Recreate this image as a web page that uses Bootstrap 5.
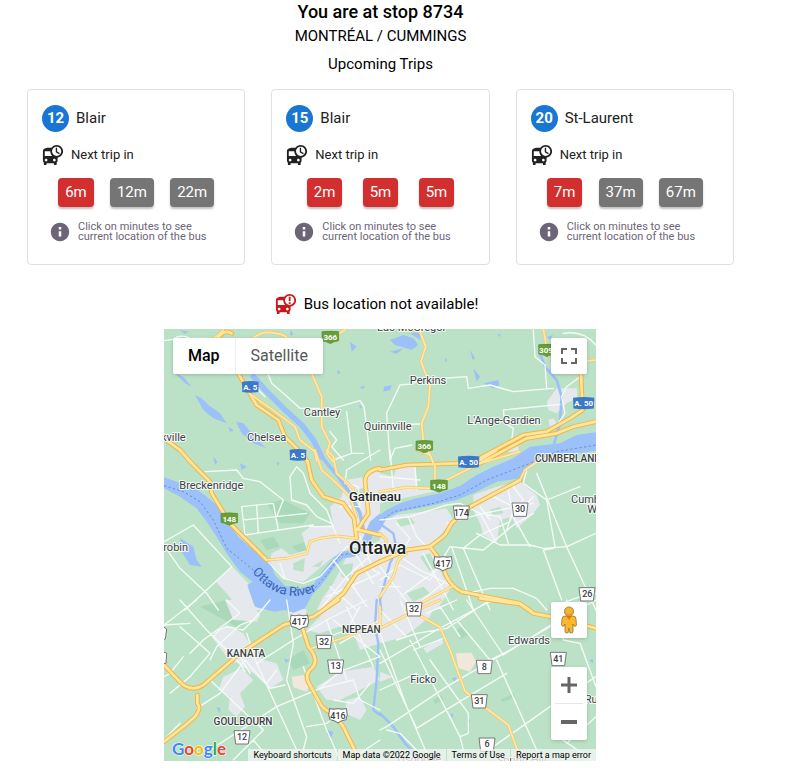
<!DOCTYPE html>
<html lang="en">
<head>
<meta charset="utf-8">
<meta name="viewport" content="width=device-width, initial-scale=1">
<title>Stop 8734</title>
<link href="https://cdn.jsdelivr.net/npm/bootstrap@5.3.0/dist/css/bootstrap.min.css" rel="stylesheet">
<style>
body{font-family:Roboto,"Liberation Sans",sans-serif;color:#000;font-size:15px;line-height:24px}
.page{padding:0 47px 9px 14px}
.stop-title{font-size:18px;font-weight:500;line-height:24px;margin:0}
.stop-name{font-size:15px;font-weight:400;line-height:24px;margin:0}
.upcoming{font-size:15px;font-weight:400;line-height:24px;margin:4px 0 13px}
.trips{--bs-gutter-x:26px;--bs-gutter-y:26px;margin:-26px 0 0}
.trip{border:1px solid #e0e0e0;border-radius:4px;color:#212121;padding:15px 14px 22px}
.route-no{width:27px;height:27px;background:#1976d2;font-size:15px;font-weight:700}
.route-head{gap:7px;font-size:15px;line-height:27px}
.next-row{gap:7px;margin-top:12px;font-size:13px;line-height:22px}
.times{margin-top:12px}
.btn-time{--bs-btn-color:#fff;--bs-btn-hover-color:#fff;--bs-btn-bg:#757575;--bs-btn-hover-bg:#616161;--bs-btn-border-width:0;--bs-btn-padding-x:7px;--bs-btn-padding-y:0;--bs-btn-font-size:15px;--bs-btn-line-height:29px;--bs-btn-border-radius:4px;box-shadow:0 2px 2px rgba(0,0,0,.24)}
.btn-soon{--bs-btn-bg:#d32f2f;--bs-btn-hover-bg:#b71c1c}
.hint{gap:8px;margin-top:15px;padding-left:8px;color:#6c6577;font-size:11px;line-height:10px}
.live{padding-right:1px}
.status{gap:7px;margin:28px 0 14px;padding-right:7px;line-height:22px}
.map-box{max-width:432px;aspect-ratio:1;overflow:hidden;background:#bbe2c6}
.ctl{background:#fff;box-shadow:0 1px 4px -1px rgba(0,0,0,.3);border-radius:2px}
.ctl button{border:0;background:none;padding:0;width:36px;height:36px;display:flex;align-items:center;justify-content:center}
.map-types{top:9px;left:9px}
.map-types button{width:auto;font-size:16px;color:#565656;padding:0 15px}
.map-types button+button{border-left:1px solid #eee}
.map-types button.chosen{color:#000;font-weight:500}
.right-top{top:9px;right:9px}
.right-bottom{right:9px;bottom:21px;gap:29px}
.zoom-line{height:1px;margin:0 4px;background:#e6e6e6}
.legal{font-size:9px;line-height:12px;right:0;bottom:0;gap:1px}
.legal>*{border:0;background:rgba(245,245,245,.74);color:#000;padding:0 5px;text-decoration:none}
.g-logo{left:8px;bottom:0}
.place{font-size:33px;fill:#3c4043;stroke:#f4faf6;stroke-width:6px;paint-order:stroke;stroke-linejoin:round;text-anchor:middle}
.district{font-size:30px;font-weight:500}
.town{font-size:39px;font-weight:500;fill:#202124}
.city{font-size:54px;font-weight:500;fill:#202124}
.from-left{text-anchor:start}
.num{font-size:27px;font-weight:500;text-anchor:middle}
.gnum{font-size:24px;font-weight:700;fill:#fff;text-anchor:middle}
</style>
<script src="https://cdn.jsdelivr.net/npm/bootstrap@5.3.0/dist/js/bootstrap.bundle.min.js"></script>
</head>
<body>
<svg class="d-none" aria-hidden="true">
  <symbol id="bus-clock" viewBox="0 0 24 24"><path d="M16 1c-2.4 0-4.52 1.21-5.78 3.05C9.84 4 9.42 4 9 4c-4.42 0-8 .5-8 4v10c0 .88.39 1.67 1 2.22V22c0 .55.45 1 1 1h1c.55 0 1-.45 1-1v-1h8v1c0 .55.45 1 1 1h1c.55 0 1-.45 1-1v-1.78c.61-.55 1-1.34 1-2.22v-3.08c3.39-.49 6-3.39 6-6.92 0-3.87-3.13-7-7-7zM4.5 19c-.83 0-1.5-.67-1.5-1.5S3.67 16 4.5 16s1.5.67 1.5 1.5S5.33 19 4.5 19zM3 13V8h6c0 1.96.81 3.73 2.11 5H3zm10.5 6c-.83 0-1.5-.67-1.5-1.5s.67-1.5 1.5-1.5 1.5.67 1.5 1.5-.67 1.5-1.5 1.5zm2.5-6c-2.76 0-5-2.24-5-5s2.24-5 5-5 5 2.24 5 5-2.24 5-5 5zm.5-9H15v5l3.62 2.16.75-1.23-2.87-1.68V4z"/></symbol>
  <symbol id="bus-alert" viewBox="0 0 24 24"><path d="M16 1c-2.4 0-4.52 1.21-5.78 3.05C9.84 4 9.42 4 9 4c-4.42 0-8 .5-8 4v10c0 .88.39 1.67 1 2.22V22c0 .55.45 1 1 1h1c.55 0 1-.45 1-1v-1h8v1c0 .55.45 1 1 1h1c.55 0 1-.45 1-1v-1.78c.61-.55 1-1.34 1-2.22v-3.08c3.39-.49 6-3.39 6-6.92 0-3.87-3.13-7-7-7zM4.5 19c-.83 0-1.5-.67-1.5-1.5S3.67 16 4.5 16s1.5.67 1.5 1.5S5.33 19 4.5 19zM3 13V8h6c0 1.96.81 3.73 2.11 5H3zm10.5 6c-.83 0-1.5-.67-1.5-1.5s.67-1.5 1.5-1.5 1.5.67 1.5 1.5-.67 1.5-1.5 1.5zm2.5-6c-2.76 0-5-2.24-5-5s2.24-5 5-5 5 2.24 5 5-2.24 5-5 5zM15 4h2v5h-2zm0 6h2v2h-2z"/></symbol>
  <symbol id="info" viewBox="0 0 24 24"><path d="M12 1C5.900 1 1 5.900 1 12s4.900 11 11 11 11-4.900 11-11S18.100 1 12 1zm1.500 16.500h-3V11h3zm0-8.500h-3V6h3z"/></symbol>
  <symbol id="box" viewBox="0 0 54 46"><path d="M3 3H51L46 43H8Z" fill="#fff" stroke="#777" stroke-width="3" stroke-linejoin="round"/></symbol>
  <symbol id="crest" viewBox="0 0 60 50"><path d="M6 4Q18 8 30 4Q42 8 54 4L57 22L53 37Q40 38 30 46Q20 38 7 37L3 22Z" fill="#fff" stroke="#777" stroke-width="3" stroke-linejoin="round"/></symbol>
  <symbol id="green" viewBox="0 0 54 38"><path d="M3 3Q27-1 51 3V29Q40 30 27 37Q14 30 3 29Z" fill="#689f38" stroke="#558b2f" stroke-width="2"/></symbol>
  <symbol id="blue" viewBox="0 0 58 40"><path d="M4 4Q29 0 54 4L53 35Q29 39 5 35Z" fill="#3b78c8"/></symbol>
</svg>

<main class="page">
  <header class="text-center">
    <h1 class="stop-title">You are at stop 8734</h1>
    <h2 class="stop-name">MONTRÉAL / CUMMINGS</h2>
    <h3 class="upcoming">Upcoming Trips</h3>
  </header>

  <section class="row row-cols-3 trips" aria-label="Upcoming trips">
    <div class="col">
      <article class="trip">
        <div class="route-head d-flex align-items-center"><span class="route-no rounded-circle text-white text-center">12</span><span>Blair</span></div>
        <div class="next-row d-flex align-items-center"><svg width="22" height="22" fill="#212121" aria-hidden="true"><use href="#bus-clock"/></svg><span>Next trip in</span></div>
        <div class="times d-flex justify-content-evenly"><button type="button" class="btn btn-time btn-soon">6m</button><button type="button" class="btn btn-time">12m</button><button type="button" class="btn btn-time">22m</button></div>
        <div class="hint d-flex align-items-center"><svg class="flex-shrink-0" width="20" height="20" fill="#6c6577" aria-hidden="true"><use href="#info"/></svg><span>Click on minutes to see<br>current location of the bus</span></div>
      </article>
    </div>
    <div class="col">
      <article class="trip">
        <div class="route-head d-flex align-items-center"><span class="route-no rounded-circle text-white text-center">15</span><span>Blair</span></div>
        <div class="next-row d-flex align-items-center"><svg width="22" height="22" fill="#212121" aria-hidden="true"><use href="#bus-clock"/></svg><span>Next trip in</span></div>
        <div class="times d-flex justify-content-evenly"><button type="button" class="btn btn-time btn-soon">2m</button><button type="button" class="btn btn-time btn-soon">5m</button><button type="button" class="btn btn-time btn-soon">5m</button></div>
        <div class="hint d-flex align-items-center"><svg class="flex-shrink-0" width="20" height="20" fill="#6c6577" aria-hidden="true"><use href="#info"/></svg><span>Click on minutes to see<br>current location of the bus</span></div>
      </article>
    </div>
    <div class="col">
      <article class="trip">
        <div class="route-head d-flex align-items-center"><span class="route-no rounded-circle text-white text-center">20</span><span>St-Laurent</span></div>
        <div class="next-row d-flex align-items-center"><svg width="22" height="22" fill="#212121" aria-hidden="true"><use href="#bus-clock"/></svg><span>Next trip in</span></div>
        <div class="times d-flex justify-content-evenly"><button type="button" class="btn btn-time btn-soon">7m</button><button type="button" class="btn btn-time">37m</button><button type="button" class="btn btn-time">67m</button></div>
        <div class="hint d-flex align-items-center"><svg class="flex-shrink-0" width="20" height="20" fill="#6c6577" aria-hidden="true"><use href="#info"/></svg><span>Click on minutes to see<br>current location of the bus</span></div>
      </article>
    </div>
  </section>

  <div class="live">
  <div class="status d-flex align-items-center justify-content-center" role="status"><svg width="22" height="22" fill="#c61a1a" aria-hidden="true"><use href="#bus-alert"/></svg><span>Bus location not available!</span></div>

  <section class="map-box position-relative mx-auto" aria-label="Map">
    <svg class="d-block w-100 h-100" viewBox="0 0 1296 1296" role="img" aria-label="Map of Ottawa and Gatineau">
      <defs>
        <!-- Roads are kept in six map tiles: NW, NE, W, E, SW, SE -->
        <g id="minor">
          <path transform="translate(-12 -147)" d="M325 285L335 310L370 340L420 385L520 385L600 362L612 380L632 540M560 395L575 520L520 540M12 182L40 178Q60 160 90 175L150 175M285 320L315 350M510 455L530 480L515 500L550 540M575 520H610"/>
          <path transform="translate(648 -147)" d="M60 315L95 312L120 300L260 290L265 325L330 315L400 335L520 325M370 390L540 373M370 390L375 430L400 445L395 480M460 150L465 230L495 255L500 325M60 315L20 400L30 540M30 540L45 505L95 495M550 160Q610 150 648 195M600 290L560 320L545 350L555 400L520 450M0 435L125 432"/>
          <path transform="translate(-12 363)" d="M12 275L100 225L215 350L75 480M25 305L60 355L140 430L175 480M135 65L230 60L250 85L300 95L370 150L350 200M245 170L340 160M245 170L255 255L460 225M250 210L440 190M290 165L295 250M340 160L355 240M410 50L390 80L395 150L440 165L470 200L515 220L540 280M410 50L430 70L450 130L500 180L520 230M320 330L370 385L430 400L480 380L560 290L590 290M450 230L520 230M360 340L375 385M480 480L560 380L660 290M520 330L600 440M560 60L555 100L595 110L600 170M560 60L660 0M500 440L660 370M510 410L590 480M560 380L620 470M600 260L640 360L660 370M540 170L600 170M580 300L640 400"/>
          <path transform="translate(648 363)" d="M0 210L90 200L200 165L240 160M85 200L110 260L150 300M50 220L90 265L60 310M30 0L40 120M105 50L110 120M0 80L120 90M215 290L250 295L300 255L390 215L400 180M215 290L280 480M250 295L330 480M240 160L300 190L360 200L385 280M385 120L400 200L450 290M440 60L430 100L500 150L525 290M470 70L560 290L648 480M500 150L600 110M290 250L360 285L450 285L490 295L560 290L648 250M520 295L490 300L545 450M210 290L310 300L400 225L460 190M300 190L345 270M200 220L310 190L460 160M60 320L120 360L220 410M0 390L60 345L150 390L210 290M130 310L220 480M0 350L100 480M60 440L170 360M90 480L190 400M0 410H60M260 430L330 415L400 415L470 445L500 480M520 470L600 440L648 430M300 170L330 210M340 140L420 180L460 140M400 110L430 150L400 180L380 240"/>
          <path transform="translate(-12 813)" d="M12 75L110 0M12 75L90 70M60 0L140 90L240 190L255 215M60 80L150 160L90 230L30 280M70 170L30 220L12 230M90 160L130 120L240 40L200 0M330 0L280 60L240 75L170 140L150 180M160 110Q170 90 200 80L250 90L280 60M260 100L290 190L350 320L410 450M290 190L400 120L500 60L620 0M380 0L385 30L400 130L380 240L440 410L430 450M110 325L180 280L255 180M150 240L310 390L280 420L220 480M255 180L330 265L375 255M150 450L350 320L480 265L540 215L660 170M480 265L580 240L600 300L660 330M500 60L560 240M560 20L640 200M520 60L660 170M570 480L660 420M440 380L500 370L540 340M430 200L500 390L540 480M600 20L560 90L480 120M660 60L540 130M520 300L580 310L630 250M350 210L320 250M240 170L270 220M12 420L60 370M280 420L330 480"/>
          <path transform="translate(648 813)" d="M0 100L80 320L150 483M0 190L170 90L300 20L340 0M50 120L110 100L200 85L330 0M90 120L240 410L250 450M230 60L330 180L370 160M260 0L370 165M370 165L520 70L648 0M20 380L200 260L510 80M110 385L230 310L380 220M350 180L470 450M240 410L265 400V340L150 180M110 385L0 150M0 270L110 220M340 440L510 320L648 230M560 0L550 120L600 130L648 260M20 390L60 400L110 450M0 30L80 110M60 0L120 140M100 150L190 115M648 350L560 430M520 400L640 483M0 390L20 380M180 20L240 110M140 40L230 0"/>
        </g>
        <g id="second">
          <path transform="translate(-12 -147)" d="M280 175Q310 145 370 165L395 185M455 280L485 350V440L510 490L500 520L520 545M275 345L345 395L405 440L420 480L465 515L470 545M520 170L555 150M160 178L190 150"/>
          <path transform="translate(648 -147)" d="M90 150L120 155L137 200L123 245L150 315L145 380L125 430L130 480L150 525L165 560M490 147L505 230M605 245L648 240"/>
          <path transform="translate(-12 363)" d="M465 0L485 60L530 100L570 140L590 200M500 0L520 20L530 70L580 115V150M320 330L380 325L440 310L450 275L480 265L530 258L590 265"/>
          <path transform="translate(648 363)" d="M0 125L80 112L150 115L200 90L240 70L300 40L420 5M110 0L150 15L165 50V100M420 90L435 60L480 30L520 20M0 440L40 380L55 330L80 310M220 408L120 460L80 480M0 250L20 270L10 300"/>
          <path transform="translate(-12 813)" d="M455 145L560 110L660 70"/>
          <path transform="translate(648 813)" d="M0 85L100 35L180 82L210 150L255 273L300 310L385 375L412 450L415 483M0 20V90M100 35L180 0"/>
        </g>
        <g id="hwy">
          <path transform="translate(-12 -147)" d="M12 475L60 510M170 180Q190 145 215 160M232 275L260 325L290 375L355 420L375 470L410 505L443 545"/>
          <path transform="translate(648 -147)" d="M280 545L430 465L500 455L570 415L608 390L603 280M300 550L440 475L530 460L580 440L648 425"/>
          <path transform="translate(-12 363)" d="M60 0L100 45L150 95L155 130L210 220L320 330M443 35L455 90L490 140L550 160L582 205L590 265M595 235L625 190L615 90Q620 60 660 55M590 238L660 255M660 335L590 370L550 430L490 480"/>
          <path transform="translate(648 363)" d="M0 60L80 45L230 40L300 30L350 0M420 90L270 170L215 220L195 255L150 290L80 300L0 335M150 290L180 330L200 380Q215 410 245 425L420 460L455 485"/>
          <path transform="translate(-12 813)" d="M535 0L460 50L370 75L240 160L130 255Q100 275 70 255L50 235L12 195M425 75L445 140Q480 180 455 205Q430 225 450 255L480 310Q490 330 520 340L550 380L600 483M112 285V310Q125 325 105 350L70 380L12 425"/>
          <path transform="translate(648 813)" d="M300 -5L420 12L460 40L510 50L600 72L648 85"/>
        </g>
      </defs>

      <rect width="1296" height="1296" fill="#bbe2c6"/>
      <g fill="#a9d9b8">
        <path transform="translate(-12 363)" d="M395 290L450 270L460 300L430 320ZM320 160L370 150L450 190L430 220L360 220ZM300 270L340 260L360 290L320 300Z"/>
        <path transform="translate(-12 813)" d="M120 20L200 0L260 60L230 80ZM380 180L430 150L450 190L400 210Z"/>
        <path transform="translate(648 813)" d="M230 90L250 75L265 105L240 118ZM360 300L400 280L405 290L370 307ZM160 300L185 285L190 300L165 312Z"/>
      </g>
      <g fill="#e5e8ec">
        <path transform="translate(648 -147)" d="M500 365L530 325L590 325L592 355L560 370L530 400L505 390ZM385 490L415 480V515H385ZM505 420L520 415L530 430L510 440Z"/>
        <path transform="translate(-12 363)" d="M168 395L215 348L265 400L280 460L330 480H240L200 430ZM335 310L365 295L390 315L440 300L425 250L450 230L520 225L510 170L545 140L555 90L620 80L660 50V250L560 300L520 320L430 395L370 385L330 335ZM470 480L490 440L520 400L560 320L660 270V480Z"/>
        <path transform="translate(648 363)" d="M0 70L40 80L50 50L105 45L115 120L200 115L140 130L0 160ZM0 220L50 195L130 185L200 175L220 210L190 245L150 290L190 380L215 410L170 480H0ZM280 135L350 110L420 95L470 135L480 165L450 200L410 235L395 200L360 210L350 280L310 255L300 220L280 180Z"/>
        <path transform="translate(-12 813)" d="M195 0H270L300 45L290 65L220 60ZM440 90L530 0H660V130L600 150L570 70L480 100ZM155 110L200 75L250 100L280 150L310 180L350 190L370 240L330 265L280 220L200 170ZM190 230L245 205L280 240L240 280L255 320L230 350L205 330L210 290L175 270ZM470 260L540 215L640 200L660 240L600 270L540 300L500 300ZM560 300L600 290L620 330L600 360L555 340ZM390 0L440 30L430 80L390 60Z"/>
        <path transform="translate(648 813)" d="M0 0H170L150 50L100 90L60 115L0 130ZM130 145L185 115L190 130L140 160ZM0 215L40 230L0 245Z"/>
      </g>
      <g fill="#f1e8dc"><path transform="translate(-12 813)" d="M395 230L430 225L448 255L440 275L400 262Z"/><path transform="translate(648 813)" d="M228 160L275 158L288 185L270 215L235 205Z"/></g>
      <g fill="#bbe2c6">
        <path transform="translate(-12 363)" d="M400 340L435 325L430 365L400 360ZM540 345L580 340L570 390L545 380ZM455 350L490 330L480 350ZM590 120L620 110L615 150L590 140Z"/>
        <path transform="translate(648 363)" d="M50 210L90 200L105 220L60 230ZM120 320L150 310L170 350L150 365ZM80 430L130 410L150 430L100 455ZM330 180L360 170L370 190L340 195Z"/>
      </g>

      <g fill="#9cc0f9">
        <path transform="translate(-12 363)" d="M12 82L50 95L110 118L150 148L185 180L205 220L235 260L280 300L330 335L345 375L375 408L420 415L460 403L490 360L520 325L545 303L590 305L600 315L575 322L550 325L525 350L500 385L480 410L460 430L435 475L400 488L375 480L345 485L310 478L285 470L270 430L262 405L278 395L240 365L200 310L170 260L140 215L110 175L60 140L12 115Z"/>
        <path transform="translate(648 363)" d="M0 195L20 180L60 160L110 145L180 130L240 108L290 75L340 50L400 25L450 -10L540 -20L590 -45L648 -53V2L560 15L480 35L440 60L420 85L350 95L290 125L230 150L130 172L60 185L20 205L0 240Z"/>
        <path transform="translate(-12 363)" d="M630 215L660 190V240L640 255L615 300L595 310L600 285Z"/>
        <path transform="translate(-12 -147)" d="M45 280L70 290L95 320L75 310ZM105 345L125 355L145 375L180 400L200 430L160 415L130 390ZM228 425L250 430L280 465L318 505L280 490L245 460ZM60 150L85 155L75 162ZM570 185L590 200L575 215ZM600 320L615 318L608 328ZM240 250L270 280H255ZM390 150L400 160L392 170ZM408 190L412 205L404 200ZM598 375L606 380L600 386ZM205 440L222 452L210 455ZM532 270L542 276L534 284Z"/>
        <path transform="translate(648 -147)" d="M30 180L70 165L100 175L115 195L95 210L65 200L45 195ZM90 160L125 155L120 180ZM12 320L35 315L30 330L10 335ZM280 265L300 290L290 305ZM310 310L355 300L358 315L340 325ZM270 210L285 235L278 240ZM500 170L520 165L510 180ZM30 215L70 205L50 222ZM195 235L202 240L196 246ZM355 160L362 166L356 172Z"/>
        <path transform="translate(-12 363)" d="M60 265L100 290L110 330L125 350L90 345L65 305ZM160 20L172 35L165 45ZM240 40L260 50L245 60ZM350 35L358 40L352 48Z"/>
        <path transform="translate(-12 813)" d="M500 390L520 395L515 412L502 405ZM170 320L182 325L178 340ZM372 175L385 180L378 190Z"/>
        <path transform="translate(648 813)" d="M262 355L270 360L265 378ZM210 340L220 342L218 355ZM628 180L640 178L638 190ZM215 235L230 232L225 245Z"/>
      </g>
      <g fill="none" stroke="#9cc0f9" stroke-linejoin="round" stroke-linecap="round">
        <path stroke-width="17" transform="translate(-12 -147)" d="M280 290L325 340L370 385L425 435L460 480L485 530"/>
        <path stroke-width="11" transform="translate(-12 363)" d="M485 20L505 45L535 80L570 130L600 190L610 240"/>
        <path stroke-width="8" transform="translate(648 -147)" d="M480 220L495 260L530 300L545 350L540 430L520 500"/>
        <path stroke-width="7" transform="translate(-12 813)" d="M650 0L645 80L655 130L650 240L640 330L660 345"/>
        <path stroke-width="8" transform="translate(648 813)" d="M0 340L40 380L75 430L120 475"/>
        <path stroke-width="7" transform="translate(648 363)" d="M5 225L40 250L50 300L30 340L0 450L5 490"/>
      </g>
      <g fill="none" stroke="#6f8fc4" stroke-width="3" stroke-dasharray="7 7">
        <path transform="translate(-12 363)" d="M12 107L70 125L120 155L160 210L200 295L280 360L350 425L400 435L460 420L500 375L540 315L590 308"/>
        <path transform="translate(648 363)" d="M0 215L40 185L160 160L240 135L320 90L450 40L530 5L648 -15"/>
      </g>

      <g fill="none" stroke-linejoin="round" stroke-linecap="round">
        <use href="#minor" stroke="#f6fbf8" stroke-width="4"/>
        <use href="#second" stroke="#f6c66a" stroke-width="9"/>
        <use href="#hwy" stroke="#f5b43c" stroke-width="14"/>
        <use href="#second" stroke="#ffe9a9" stroke-width="5"/>
        <use href="#hwy" stroke="#ffe6a0" stroke-width="8"/>
      </g>

      <g class="place">
        <g transform="translate(-12 -147)"><text x="486" y="409">Cantley</text><text x="320" y="482">Chelsea</text><text x="40" y="482">kville</text><text x="683" y="449">Quinnville</text></g>
        <g transform="translate(648 -147)"><text x="95" y="153">Lac-McGregor</text><text x="144" y="311">Perkins</text><text x="372" y="433">L'Ange-Gardien</text><text class="district from-left" x="465" y="545">CUMBERLAND</text></g>
        <g transform="translate(-12 363)"><text x="154" y="118">Breckenridge</text><text x="47" y="302">robin</text><text class="town" x="645" y="154">Gatineau</text><text class="city" x="653" y="313">Ottawa</text></g>
        <g transform="translate(648 363)" class="from-left"><text x="573" y="158">Cumberland</text><text x="622" y="190">West</text></g>
        <g transform="translate(-12 813)"><text class="district" x="258" y="170">KANATA</text><text class="district" x="604" y="98">NEPEAN</text><text class="district" x="249" y="375">GOULBOURN</text></g>
        <g transform="translate(648 813)"><text x="447" y="131">Edwards</text><text x="130" y="250">Ficko</text><text class="from-left" x="614" y="308">Russell</text><text x="425" y="492">Spring Hill</text><text x="118" y="490">Osgoode</text></g>
      </g>
      <defs><path id="river-name" d="M264 729Q364 850 490 768"/></defs>
      <text font-size="39" fill="#3367b5"><textPath href="#river-name">Ottawa River</textPath></text>

      <g class="gnum">
        <use href="#green" x="471" y="5" width="56" height="40"/><text x="499" y="33">366</text>
        <use href="#green" x="753" y="333" width="56" height="40"/><text x="781" y="361">366</text>
        <use href="#green" x="168" y="550" width="56" height="40"/><text x="196" y="579">148</text>
        <use href="#green" x="797" y="451" width="56" height="40"/><text x="825" y="480">148</text>
        <use href="#green" x="1121" y="44" width="56" height="40"/><text x="1146" y="72">309</text>
        <use href="#blue" x="230" y="153" width="58" height="42"/><text x="259" y="183">A. 5</text>
        <use href="#blue" x="373" y="357" width="58" height="42"/><text x="402" y="386">A. 5</text>
        <svg x="1222" y="202" width="74" height="42" viewBox="0 0 58 40" preserveAspectRatio="none"><use href="#blue" width="58" height="40"/></svg><text x="1259" y="232">A. 50</text>
        <svg x="877" y="378" width="74" height="42" viewBox="0 0 58 40" preserveAspectRatio="none"><use href="#blue" width="58" height="40"/></svg><text x="914" y="408">A. 50</text>
      </g>
      <g class="num" fill="#3c4043">
        <use href="#crest" x="806" y="678" width="62" height="52"/><text x="837" y="713">417</text>
        <use href="#crest" x="375" y="854" width="62" height="52"/><text x="406" y="889">417</text>
        <use href="#crest" x="491" y="1134" width="62" height="52"/><text x="522" y="1169">416</text>
        <use href="#box" x="862" y="528" width="60" height="46"/><text x="892" y="560">174</text>
        <use href="#box" x="1041" y="519" width="54" height="46"/><text x="1068" y="550">30</text>
        <use href="#box" x="723" y="818" width="54" height="46"/><text x="750" y="850">32</text>
        <use href="#box" x="453" y="916" width="54" height="46"/><text x="480" y="948">32</text>
        <use href="#box" x="488" y="990" width="54" height="46"/><text x="515" y="1021">13</text>
        <use href="#box" x="207" y="1202" width="54" height="46"/><text x="234" y="1233">12</text>
        <use href="#box" x="934" y="991" width="54" height="46"/><text x="961" y="1022">8</text>
        <use href="#box" x="1156" y="967" width="54" height="46"/><text x="1183" y="998">41</text>
        <use href="#box" x="919" y="1094" width="54" height="46"/><text x="946" y="1125">31</text>
        <use href="#box" x="942" y="1224" width="54" height="46"/><text x="969" y="1255">6</text>
        <use href="#box" x="1242" y="773" width="54" height="46"/><text x="1270" y="804">26</text>
      </g>
      <path d="M0 895L8 900L4 930L0 932M0 970L8 972L6 1003L0 1004" fill="#fff" stroke="#777" stroke-width="3"/>
    </svg>

    <div class="ctl map-types position-absolute d-flex"><button type="button" class="chosen">Map</button><button type="button">Satellite</button></div>
    <div class="ctl right-top position-absolute"><button type="button" aria-label="Toggle fullscreen view"><svg width="18" height="18" viewBox="0 0 18 18" fill="#666" aria-hidden="true"><path d="M1 1h6v2H3v4H1zM11 1h6v6h-2V3h-4zM1 11h2v4h4v2H1zM15 11h2v6h-6v-2h4z"/></svg></button></div>
    <div class="right-bottom position-absolute d-flex flex-column">
      <div class="ctl"><button type="button" aria-label="Street View"><svg width="18" height="28" viewBox="0 0 18 28" aria-hidden="true"><path d="M5 10Q2 10 2 13L1.500 19Q2 21 4 20L5 18V26Q5 27 8 27L9 22L10 27Q13 27 13 26V18L14 20Q16 21 16.500 19L16 13Q16 10 13 10Z" fill="#fbb829" stroke="#7d6a43" stroke-width=".7"/><path d="M6 10L9 14L12 10Z" fill="#e87922"/><circle cx="9" cy="5.500" r="4.600" fill="#f5b32b" stroke="#7d6a43" stroke-width=".7"/><path d="M4.800 6Q9 10 13.200 6Q12 10 9 10T4.800 6" fill="#e99a20"/></svg></button></div>
      <div class="ctl"><button type="button" aria-label="Zoom in"><svg width="16" height="16" viewBox="0 0 16 16" fill="#666" aria-hidden="true"><path d="M6.500 0h3v6.500H16v3H9.500V16h-3V9.500H0v-3h6.500z"/></svg></button><div class="zoom-line"></div><button type="button" aria-label="Zoom out"><svg width="16" height="16" viewBox="0 0 16 16" fill="#666" aria-hidden="true"><path d="M0 6h16v4H0z"/></svg></button></div>
    </div>
    <a class="g-logo position-absolute" href="#google" aria-label="Google"><svg class="d-block" width="60" height="24" viewBox="0 0 60 24"><text x="0" y="18" font-family="Lato,sans-serif" font-size="17" font-weight="700" stroke="#fff" stroke-width="1" paint-order="stroke"><tspan fill="#4285f4">G</tspan><tspan fill="#ea4335">o</tspan><tspan fill="#fbbc04">o</tspan><tspan fill="#4285f4">g</tspan><tspan fill="#34a853">l</tspan><tspan fill="#ea4335">e</tspan></text></svg></a>
    <div class="legal position-absolute d-flex text-nowrap"><button type="button">Keyboard shortcuts</button><span>Map data ©2022 Google</span><a href="#terms">Terms of Use</a><a href="#report">Report a map error</a></div>
  </section>
  </div>
</main>
</body>
</html>
